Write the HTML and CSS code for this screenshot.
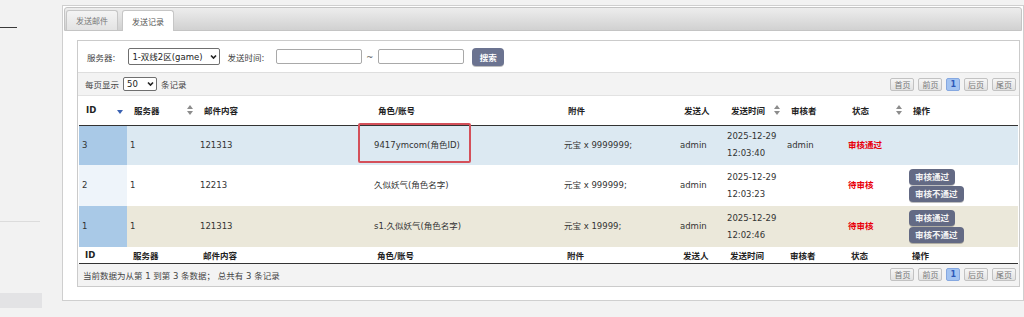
FILE: index.html
```html
<!DOCTYPE html>
<html lang="zh-CN">
<head>
    <meta charset="UTF-8" />
    <title>发送记录</title>
    <link rel="stylesheet" href="styles.css">
</head>
<body>
<aside class="side">
    <div class="side-mark"></div>
    <div class="side-rule"></div>
    <div class="side-block"></div>
</aside>

<main class="panel">
    <div class="tabs">
        <a class="tab">发送邮件</a>
        <a class="tab active">发送记录</a>
    </div>

    <div class="tab-body">
        <div class="box">
            <form class="search">
                <label class="lbl-server">服务器:</label>
                <span class="sel sel-server">
                    <select><option>1-双线2区(game)</option></select>
                    <svg class="chev" width="7" height="5" viewBox="0 0 7 5"><path d="M1 1 L3.5 3.6 L6 1" fill="none" stroke="#222" stroke-width="1.6"/></svg>
                </span>
                <label class="lbl-time">发送时间:</label>
                <input class="date" type="text">
                <span class="tilde">~</span>
                <input class="date date-end" type="text">
                <button type="button" class="btn-search">搜索</button>
            </form>

            <div class="bar bar-top">
                <div class="length">每页显示
                    <span class="sel sel-page">
                        <select><option>50</option></select>
                        <svg class="chev" width="7" height="5" viewBox="0 0 7 5"><path d="M1 1 L3.5 3.6 L6 1" fill="none" stroke="#222" stroke-width="1.6"/></svg>
                    </span>
                    条记录</div>
                <div class="pager">
                    <span class="pg">首页</span>
                    <span class="pg">前页</span>
                    <span class="pg current">1</span>
                    <span class="pg">后页</span>
                    <span class="pg">尾页</span>
                </div>
            </div>

            <table class="records">
                <colgroup>
                    <col style="width:48px"><col style="width:70px"><col style="width:174px">
                    <col style="width:190px"><col style="width:116px"><col style="width:47px">
                    <col style="width:60px"><col style="width:61px"><col style="width:61px">
                    <col style="width:112px">
                </colgroup>
                <thead>
                <tr>
                    <th><div class="th-in">ID <svg class="sort" width="6" height="10" viewBox="0 0 6 10"><polygon points="0,5 6,5 3,9" fill="#3b62b2"/></svg></div></th>
                    <th><div class="th-in">服务器 <svg class="sort" width="6" height="10" viewBox="0 0 6 10"><polygon points="3,0 6,4 0,4" fill="#8c8c8c"/><polygon points="0,6 6,6 3,10" fill="#8c8c8c"/></svg></div></th>
                    <th>邮件内容</th>
                    <th>角色/账号</th>
                    <th>附件</th>
                    <th>发送人</th>
                    <th><div class="th-in">发送时间 <svg class="sort" width="6" height="10" viewBox="0 0 6 10"><polygon points="3,0 6,4 0,4" fill="#8c8c8c"/><polygon points="0,6 6,6 3,10" fill="#8c8c8c"/></svg></div></th>
                    <th>审核者</th>
                    <th><div class="th-in">状态 <svg class="sort" width="6" height="10" viewBox="0 0 6 10"><polygon points="3,0 6,4 0,4" fill="#8c8c8c"/><polygon points="0,6 6,6 3,10" fill="#8c8c8c"/></svg></div></th>
                    <th>操作</th>
                </tr>
                </thead>
                <tbody>
                <tr class="row-blue">
                    <td class="sorted">3</td>
                    <td>1</td>
                    <td>121313</td>
                    <td class="role">9417ymcom(角色ID)<div class="mark-box"></div></td>
                    <td>元宝 x 9999999;</td>
                    <td>admin</td>
                    <td>2025-12-29<br>12:03:40</td>
                    <td>admin</td>
                    <td class="state">审核通过</td>
                    <td></td>
                </tr>
                <tr class="row-plain">
                    <td class="sorted">2</td>
                    <td>1</td>
                    <td>12213</td>
                    <td>久似妖气(角色名字)</td>
                    <td>元宝 x 999999;</td>
                    <td>admin</td>
                    <td>2025-12-29<br>12:03:23</td>
                    <td></td>
                    <td class="state">待审核</td>
                    <td>
                        <button type="button" class="btn-op">审核通过</button>
                        <button type="button" class="btn-op">审核不通过</button>
                    </td>
                </tr>
                <tr class="row-warm">
                    <td class="sorted">1</td>
                    <td>1</td>
                    <td>121313</td>
                    <td>s1.久似妖气(角色名字)</td>
                    <td>元宝 x 19999;</td>
                    <td>admin</td>
                    <td>2025-12-29<br>12:02:46</td>
                    <td></td>
                    <td class="state">待审核</td>
                    <td>
                        <button type="button" class="btn-op">审核通过</button>
                        <button type="button" class="btn-op">审核不通过</button>
                    </td>
                </tr>
                </tbody>
                <tfoot>
                <tr>
                    <th>ID</th>
                    <th>服务器</th>
                    <th>邮件内容</th>
                    <th>角色/账号</th>
                    <th>附件</th>
                    <th>发送人</th>
                    <th>发送时间</th>
                    <th>审核者</th>
                    <th>状态</th>
                    <th>操作</th>
                </tr>
                </tfoot>
            </table>

            <div class="bar bar-bottom">
                <div class="info">当前数据为从第 1 到第 3 条数据； 总共有 3 条记录</div>
                <div class="pager">
                    <span class="pg">首页</span>
                    <span class="pg">前页</span>
                    <span class="pg current">1</span>
                    <span class="pg">后页</span>
                    <span class="pg">尾页</span>
                </div>
            </div>
        </div>
    </div>
</main>
</body>
</html>
```

FILE: styles.css
```css
body {
    margin: 0;
    background-color: #f2f2f2;
    font-family: "DejaVu Sans", "Noto Sans CJK SC", sans-serif;
    font-size: 8.5px;
    color: #333;
    display: flex;
    align-items: flex-start;
}

/* left menu remains */
.side {
    width: 62px;
    flex-shrink: 0;
    display: flex;
    flex-direction: column;
}

.side-mark {
    width: 17px;
    height: 1px;
    background-color: #3a3a3a;
    margin-top: 27px;
}

.side-rule {
    width: 40px;
    height: 1px;
    background-color: #dcdcdc;
    margin-top: 193px;
}

.side-block {
    width: 42px;
    height: 15px;
    background-color: #e3e3e5;
    margin-top: 71px;
}

.panel {
    margin-top: 5px;
    width: 962px;
    height: 296px;
    box-sizing: border-box;
    border: 1px solid #cfcfcf;
    background-color: #fff;
    padding: 1px;
}

.tabs {
    height: 24px;
    box-sizing: border-box;
    border: 1px solid #c4c4c4;
    border-radius: 3px 3px 0 0;
    background: linear-gradient(#ededed, #d1d1d1);
    display: flex;
    align-items: flex-end;
    gap: 4px;
    padding-left: 1px;
}

.tab {
    height: 20px;
    box-sizing: border-box;
    padding: 0 9px;
    border: 1px solid #c6c6c6;
    border-bottom: none;
    border-radius: 3px 3px 0 0;
    background: linear-gradient(#f4f4f4, #e3e3e3);
    font-size: 8px;
    color: #777;
    display: flex;
    align-items: center;
}

.tab.active {
    height: 21px;
    margin-bottom: -1px;
    background: #fff;
    color: #555;
}

.tab-body {
    padding: 9px 2px 0 13px;
}

.box {
    border: 1px solid #cbcbcb;
}

.search {
    height: 31px;
    margin: 0;
    border-bottom: 1px solid #dedede;
    display: flex;
    align-items: center;
    padding-left: 9px;
}

.search label {
    color: #444;
}

/* select with drawn chevron */
.sel {
    position: relative;
    display: inline-flex;
}

.sel select {
    appearance: none;
    -webkit-appearance: none;
    width: 100%;
    box-sizing: border-box;
    font-family: inherit;
    font-size: 8.5px;
    color: #222;
    padding: 0 12px 0 3px;
    border: 1px solid #6f6f6f;
    border-radius: 2px;
    background: #fff;
}

.chev {
    position: absolute;
    right: 3px;
    top: 50%;
    transform: translateY(-50%);
    pointer-events: none;
}

.sel-server {
    width: 92px;
    height: 17px;
    margin-left: 13px;
}

.sel-page {
    width: 34px;
    height: 14px;
    margin: 0 1px;
}

.lbl-time {
    margin-left: 7px;
}

.date {
    width: 86px;
    height: 15px;
    box-sizing: border-box;
    margin-left: 12px;
    border: 1px solid #a9a9a9;
    border-radius: 2px;
    padding: 0;
}

.tilde {
    margin-left: 4px;
    color: #555;
}

.date-end {
    margin-left: 5px;
}

.btn-search {
    margin-left: 8px;
    width: 32px;
    height: 18px;
    padding: 0;
    border: none;
    border-radius: 4px;
    background-color: #6b7390;
    color: #fff;
    font-family: inherit;
    font-size: 8.5px;
    font-weight: bold;
    box-shadow: 0 1px 0 rgba(0, 0, 0, 0.25);
}

.bar {
    height: 22px;
    background-color: #f3f3f3;
    display: flex;
    align-items: center;
    justify-content: space-between;
    padding: 0 3px 0 7px;
}

.bar-top {
    border-bottom: 1px solid #e2e2e2;
}

.bar-bottom {
    padding-left: 5px;
}

.length {
    display: flex;
    align-items: center;
    gap: 3px;
    color: #444;
}

.info {
    color: #444;
}

.pager {
    display: flex;
    gap: 4px;
}

.pg {
    height: 13px;
    box-sizing: border-box;
    padding: 0 3px;
    border: 1px solid #c2c2c2;
    border-radius: 2px;
    background: linear-gradient(#f6f6f6, #e2e2e2);
    color: #777;
    font-size: 8px;
    display: flex;
    align-items: center;
}

.pg.current {
    background: #a3c3f1;
    border-color: #86a8e0;
    color: #2c58b8;
    font-weight: bold;
}

.records {
    width: 939px;
    margin-left: 1px;
    border-collapse: collapse;
    table-layout: fixed;
}

.records th {
    text-align: left;
    font-weight: bold;
    color: #222;
    padding: 0 4px 0 7px;
    white-space: nowrap;
}

.records thead tr {
    height: 29px;
}

.records thead th {
    border-bottom: 1px solid #333;
}

.records tfoot tr {
    height: 16px;
}

.records tfoot th {
    padding-left: 6px;
    border-bottom: 1px solid #333;
}

.th-in {
    display: flex;
    align-items: center;
    justify-content: space-between;
}

.records td {
    padding: 0 3px;
    line-height: 17px;
    vertical-align: middle;
    white-space: nowrap;
}

.row-blue {
    height: 40px;
    background-color: #dce9f2;
}

.row-plain {
    height: 41px;
    background-color: #fff;
}

.row-warm {
    height: 41px;
    background-color: #ebe8da;
}

.row-blue .sorted,
.row-warm .sorted {
    background-color: #a9c9e7;
}

.row-plain .sorted {
    background-color: #eef4fa;
}

.role {
    position: relative;
}

.mark-box {
    position: absolute;
    left: -13px;
    top: -3px;
    width: 113px;
    height: 40px;
    box-sizing: border-box;
    border: 2px solid #d4505a;
    border-radius: 2px;
}

.state {
    color: #e8000b;
    font-weight: bold;
}

.btn-op {
    display: block;
    height: 16px;
    margin: 0 0 1px;
    padding: 0 6px;
    border: none;
    border-radius: 4px;
    background-color: #636a84;
    color: #f4f4f4;
    font-family: inherit;
    font-size: 8.5px;
    font-weight: bold;
    line-height: 16px;
    box-shadow: 0 1px 0 rgba(0, 0, 0, 0.25);
}

.btn-op:last-child {
    margin-bottom: 0;
}
```
